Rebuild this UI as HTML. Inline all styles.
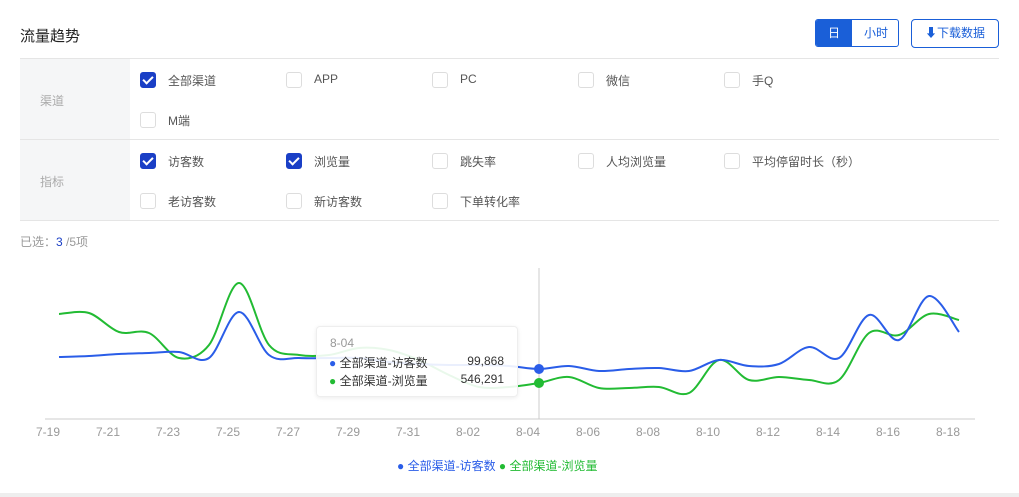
<!DOCTYPE html><html><head><meta charset="utf-8"><style>
body{margin:0;width:1019px;height:497px;background:#fff;font-family:"Liberation Sans","Noto Sans CJK SC",sans-serif;position:relative;overflow:hidden;color:#333}
.a{position:absolute}
.t{font-size:15px;left:20px;top:25px;color:#222}
.cb{position:absolute;width:16px;height:16px;border:1px solid #ddd;border-radius:3px;box-sizing:border-box;background:#fff}
.cb.on{background:#1a3fc6;border-color:#1a3fc6}
.cb.on:after{content:"";position:absolute;left:4px;top:1px;width:4px;height:8px;border:solid #fff;border-width:0 2px 2px 0;transform:rotate(45deg)}
.lb{position:absolute;font-size:12px;color:#555}
.ax{position:absolute;font-size:12px;color:#999;top:425px}
</style></head><body>
<div class="a t">流量趋势</div>
<div class="a" style="left:815px;top:19px;width:84px;height:28px;border:1px solid #1a5fd8;border-radius:3px;box-sizing:border-box;overflow:hidden;font-size:12px">
<div class="a" style="left:0;top:0;width:36px;height:28px;background:#1a5fd8;color:#fff;text-align:center;line-height:26px">日</div>
<div class="a" style="left:36px;top:0;width:48px;text-align:center;line-height:26px;color:#1a5fd8">小时</div></div>
<div class="a" style="left:911px;top:19px;width:88px;height:29px;border:1px solid #1a5fd8;border-radius:4px;box-sizing:border-box;font-size:12px;color:#1a5fd8;text-align:center;line-height:27px">⬇下载数据</div>
<div class="a" style="left:20px;top:58px;width:979px;height:1px;background:#e5e5e5"></div>
<div class="a" style="left:20px;top:139px;width:979px;height:1px;background:#e5e5e5"></div>
<div class="a" style="left:20px;top:220px;width:979px;height:1px;background:#e5e5e5"></div>
<div class="a" style="left:20px;top:59px;width:110px;height:80px;background:#f5f6f7"></div>
<div class="a" style="left:20px;top:140px;width:110px;height:80px;background:#f5f6f7"></div>
<div class="lb" style="left:40px;top:92px;color:#aaa">渠道</div>
<div class="lb" style="left:40px;top:173px;color:#aaa">指标</div>
<div id="cbs"></div>
<div class="a" style="left:20px;top:233px;font-size:12px;color:#999">已选：<span style="color:#1a3fc6">3</span> /5项</div>
<svg class="a" style="left:0;top:0" width="1019" height="497" id="ch">
<line x1="45" y1="419" x2="975" y2="419" stroke="#ccc"/>
<line x1="539" y1="268" x2="539" y2="419" stroke="#ccc"/>
</svg>
<div class="a" style="left:316px;top:326px;width:200px;height:69px;background:rgba(255,255,255,.9);border:1px solid #eee;border-radius:4px;box-shadow:0 1px 4px rgba(0,0,0,.08);font-size:12px">
<div class="a" style="left:13px;top:9px;color:#999">8-04</div>
<div class="a" style="left:12px;top:27px;color:#333"><span style="color:#2a5de8">●</span> 全部渠道-访客数</div>
<div class="a" style="right:13px;top:27px">99,868</div>
<div class="a" style="left:12px;top:45px;color:#333"><span style="color:#22bb33">●</span> 全部渠道-浏览量</div>
<div class="a" style="right:13px;top:45px">546,291</div></div>
<div class="a" style="left:397px;top:457px;font-size:12px;color:#2a5de8">● 全部渠道-访客数 <span style="color:#22bb33">● 全部渠道-浏览量</span></div>
<div class="a" style="left:0;top:493px;width:1019px;height:4px;background:#eee"></div>
<script>
var rows=[[72,[["全部渠道",1],["APP"],["PC"],["微信"],["手Q"]]],[112,[["M端"]]],[153,[["访客数",1],["浏览量",1],["跳失率"],["人均浏览量"],["平均停留时长（秒）"]]],[193,[["老访客数"],["新访客数"],["下单转化率"]]]];
var h="";rows.forEach(function(r){r[1].forEach(function(c,i){var x=140+146*i;h+='<div class="cb'+(c[1]?' on':'')+'" style="left:'+x+'px;top:'+r[0]+'px"></div><div class="lb" style="left:'+(x+28)+'px;top:'+(r[0]+0)+'px">'+c[0]+'</div>';});});
document.getElementById('cbs').innerHTML=h;
var L=["7-19","7-21","7-23","7-25","7-27","7-29","7-31","8-02","8-04","8-06","8-08","8-10","8-12","8-14","8-16","8-18"];
L.forEach(function(s,i){var d=document.createElement('div');d.className='ax';d.textContent=s;d.style.left=(36+60*i)+'px';document.body.appendChild(d);});
var B=[357,356,354,353,352,358,312,355,358,358,358,362,364,365,365,366,369,366,371,369,368,371,360,366,364,347,358,315,340,296,332];
var G=[314,313,332,333,358,345,283,345,355,355,348,350,360,375,387,387,383,377,388,388,387,393,360,380,377,380,380,333,335,314,320];
function path(v){var p=v.map(function(y,i){return[59+30*i,y]});var d="M"+p[0];for(var i=0;i<p.length-1;i++){var a=p[i-1]||p[i],b=p[i],c=p[i+1],e=p[i+2]||c;d+=" C"+(b[0]+(c[0]-a[0])/6)+","+(b[1]+(c[1]-a[1])/6)+" "+(c[0]-(e[0]-b[0])/6)+","+(c[1]-(e[1]-b[1])/6)+" "+c[0]+","+c[1];}return d;}
var s=document.getElementById('ch');
s.innerHTML+='<path d="'+path(G)+'" fill="none" stroke="#22bb33" stroke-width="2"/><path d="'+path(B)+'" fill="none" stroke="#2a5de8" stroke-width="2"/><circle cx="539" cy="369" r="5" fill="#2a5de8"/><circle cx="539" cy="383" r="5" fill="#22bb33"/>';
</script>
</body></html>
